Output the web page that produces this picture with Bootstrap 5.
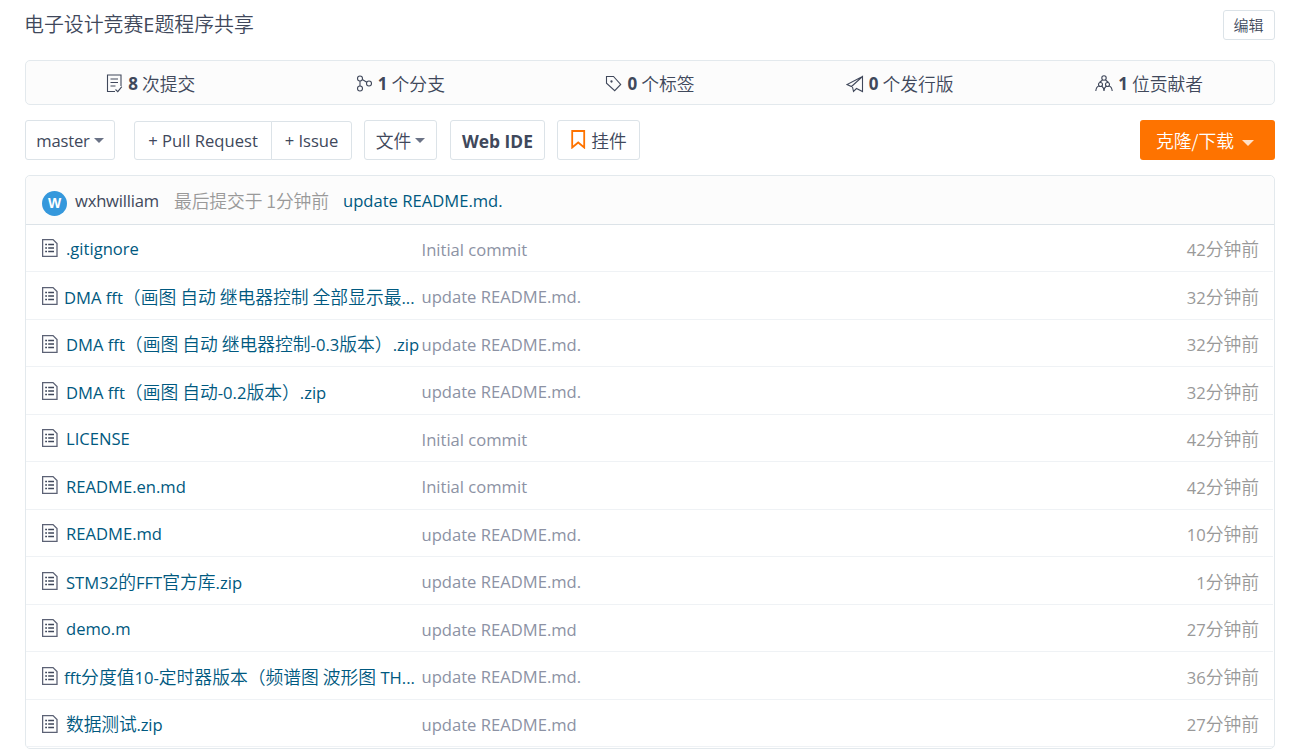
<!DOCTYPE html>
<html lang="zh-CN">
<head>
<meta charset="utf-8">
<title>电子设计竞赛E题程序共享</title>
<link href="https://cdn.jsdelivr.net/npm/bootstrap@5.3.0/dist/css/bootstrap.min.css" rel="stylesheet">
<style>
body{font-family:"Open Sans","Noto Sans CJK SC",sans-serif;font-size:16.6px;line-height:24px;color:#40485b;background:#fff;overflow:hidden}
.zh{font-family:"Noto Sans CJK SC",sans-serif;font-size:17.8px;font-weight:350}
.repo{width:1250px;margin-left:25px;padding-top:10px}
.title-row{height:30px;margin-bottom:20px}
.repo-title{font-size:19.9px;line-height:30px;margin:0 0 0 -1px;color:#40485b;font-weight:350}
.repo-title span{font-weight:400}
.btn-line{border:1px solid #dce3e8;border-radius:3px;background:#fff;color:#40485b;height:40px;padding:0;font-size:16.6px;line-height:24px;display:inline-flex;align-items:center;justify-content:center;white-space:nowrap}
.btn-edit{width:52px;height:30px;font-size:15px;padding-right:1px}
.stats{height:45px;border:1px solid #e3e9ed;border-radius:5px;background:#fcfcfc;margin-bottom:15px;padding-top:2px}
.stats b{margin:0 4px 0 5px;font-size:17px}
.stats .zh{margin-top:-1px}
.tools{height:40px;margin-bottom:15px}
.tools .btn-line{padding-top:1px}
.tools .btn-line .zh{margin-top:-2px}
.tools .pr-btn{height:39px;margin-top:1px;padding-top:0}
.caret{display:inline-block;border:5px solid transparent;border-top-color:#6b7386;border-bottom:0;margin-left:4px}
.btn-clone{width:135px;height:40px;border:0;border-radius:3px;background:#fe7300;color:#fff;padding:0 5px 1px 0}
.btn-clone .caret{border-width:6px 6px 0;border-top-color:#ffe0c6;margin-left:8px}
.panel{border:1px solid #e3e9ed;border-radius:5px;height:574px}
.panel-head{height:49px;background:#fcfcfc;border-bottom:1px solid #dce3e8;padding:1px 0 0 16px;border-radius:5px 5px 0 0}
.avatar{width:25px;height:25px;border-radius:50%;background:#3598dc;color:#fff;font:bold 14px/25px "Liberation Sans",sans-serif;text-align:center;margin:6px 8px 0 0}
.t-user{width:99px;letter-spacing:-.2px}
.t-last{width:169px;letter-spacing:-.1px;margin-top:-2px}
.file{height:47.5px;border-bottom:1px solid #eff2f5;padding:3px 14px 0 16px;margin-right:1px}
.panel-head + .file{margin-top:-.4px}
.fname{width:379.5px;color:#005980;white-space:nowrap}
.fname svg{margin-right:8px;margin-top:-6px}
.cut svg{margin-right:6px}
.msg{color:#8c92a4;padding-top:1px}
.when,.t-last{color:#999}
.lnk{color:#005980}
</style>
</head>
<body>
<svg width="0" height="0" class="position-absolute">
<symbol id="doc" viewBox="0 0 16 18"><path d="M.6 .6h10.400l4 4v12.800H.6z" fill="none" stroke="#5c6275" stroke-width="1.3"/><path d="M3.200 5.500h1.800M3.200 9h1.800M3.200 12.500h1.800M6.200 5.500h5.800M6.200 9h5.800M6.200 12.500h5.800" stroke="#40485b" stroke-width="1.400"/></symbol>
</svg>
<main class="repo">
<div class="title-row d-flex justify-content-between">
<h1 class="repo-title">电子设计竞赛<span>E</span>题程序共享</h1>
<button class="btn-line btn-edit zh">编辑</button>
</div>
<div class="stats row g-0 align-items-center">
<div class="col d-flex justify-content-center align-items-center"><svg width="17" height="19" viewBox="0 0 17 19" fill="none" stroke="#40485b" stroke-width="1.1"><path d="M15 12V1H1.500v16.500H9M4.500 5h7.500M4.500 8.500h7.500M4.500 12h5M9.500 15.500l2.300 2.200 4-5"/></svg><b>8</b><span class="zh">次提交</span></div>
<div class="col d-flex justify-content-center align-items-center"><svg width="17" height="17" viewBox="0 0 17 17" fill="none" stroke="#40485b" stroke-width="1.1"><circle cx="4" cy="3.500" r="2.500"/><circle cx="4" cy="13.500" r="2.500"/><circle cx="13" cy="8.500" r="2.500"/><path d="M4 6v5M6.300 4.600l4.500 2.600"/></svg><b>1</b><span class="zh">个分支</span></div>
<div class="col d-flex justify-content-center align-items-center"><svg width="17" height="17" viewBox="0 0 17 17" fill="none" stroke="#40485b" stroke-width="1.100"><path d="M1.500 1.500h7l7.200 8-6 6.200L1.500 8.200z"/><circle cx="6.500" cy="6.500" r=".6" fill="#40485b"/></svg><b>0</b><span class="zh">个标签</span></div>
<div class="col d-flex justify-content-center align-items-center"><svg width="18" height="18" viewBox="0 0 18 18" fill="none" stroke="#40485b" stroke-width="1.100"><path d="M16.500 1.500L1 9.500l4.500 2 11-10v15l-6-3-3 3-1-4.500"/></svg><b>0</b><span class="zh">个发行版</span></div>
<div class="col d-flex justify-content-center align-items-center"><svg width="18" height="17" viewBox="0 0 18 17" fill="none" stroke="#40485b" stroke-width="1.100"><circle cx="9" cy="3" r="2.200"/><circle cx="5.500" cy="9.500" r="2"/><circle cx="12.500" cy="9.500" r="2"/><path d="M7.500 5L4.500 7.500M10.500 5l3 2.500M.8 16c.3-3 1.500-4.500 3-5M9 16c0-2.500-1-4-2.300-5M9 16c0-2.500 1-4 2.300-5M17.200 16c-.3-3-1.500-4.500-3-5"/></svg><b>1</b><span class="zh">位贡献者</span></div>
</div>
<div class="tools d-flex align-items-center">
<button class="btn-line" style="width:90px"><span style="letter-spacing:-.2px">master</span><i class="caret"></i></button>
<div class="d-flex" style="margin:0 12px 0 19px"><button class="btn-line pr-btn rounded-end-0" style="width:138px">+ Pull Request</button><button class="btn-line pr-btn rounded-start-0" style="width:81px;margin-left:-1px">+ Issue</button></div>
<button class="btn-line" style="width:73px"><span class="zh">文件</span><i class="caret"></i></button>
<button class="btn-line" style="width:95px;margin:0 12px 0 13px"><b style="font-size:17.400px">Web IDE</b></button>
<button class="btn-line" style="width:83px"><svg width="15" height="19" viewBox="0 0 15 19" fill="none" stroke="#fe7300" stroke-width="1.800" style="margin:-3px 5px 0 1px"><path d="M1.200 1h12v16.500l-6-5-6 5z"/></svg><span class="zh">挂件</span></button>
<button class="btn-clone ms-auto zh">克隆/下载<i class="caret align-middle"></i></button>
</div>
<section class="panel">
<div class="panel-head d-flex align-items-center"><span class="avatar">W</span><span class="t-user">wxhwilliam</span><span class="zh t-last">最后提交于 1分钟前</span><span class="lnk">update README.md.</span></div>
<div class="file d-flex align-items-center"><div class="fname"><svg width="16" height="18"><use href="#doc"/></svg><span>.gitignore</span></div><span class="msg">Initial commit</span><span class="when ms-auto">42<span class="zh">分钟前</span></span></div>
<div class="file d-flex align-items-center"><div class="fname cut"><svg width="16" height="18"><use href="#doc"/></svg><span>DMA fft<span class="zh">（画图 自动 继电器控制 全部显示最</span>...</span></div><span class="msg">update README.md.</span><span class="when ms-auto">32<span class="zh">分钟前</span></span></div>
<div class="file d-flex align-items-center"><div class="fname"><svg width="16" height="18"><use href="#doc"/></svg><span>DMA fft<span class="zh">（画图 自动 继电器控制</span>-0.3<span class="zh">版本）</span>.zip</span></div><span class="msg">update README.md.</span><span class="when ms-auto">32<span class="zh">分钟前</span></span></div>
<div class="file d-flex align-items-center"><div class="fname"><svg width="16" height="18"><use href="#doc"/></svg><span>DMA fft<span class="zh">（画图 自动</span>-0.2<span class="zh">版本）</span>.zip</span></div><span class="msg">update README.md.</span><span class="when ms-auto">32<span class="zh">分钟前</span></span></div>
<div class="file d-flex align-items-center"><div class="fname"><svg width="16" height="18"><use href="#doc"/></svg><span>LICENSE</span></div><span class="msg">Initial commit</span><span class="when ms-auto">42<span class="zh">分钟前</span></span></div>
<div class="file d-flex align-items-center"><div class="fname"><svg width="16" height="18"><use href="#doc"/></svg><span>README.en.md</span></div><span class="msg">Initial commit</span><span class="when ms-auto">42<span class="zh">分钟前</span></span></div>
<div class="file d-flex align-items-center"><div class="fname"><svg width="16" height="18"><use href="#doc"/></svg><span>README.md</span></div><span class="msg">update README.md.</span><span class="when ms-auto">10<span class="zh">分钟前</span></span></div>
<div class="file d-flex align-items-center"><div class="fname"><svg width="16" height="18"><use href="#doc"/></svg><span>STM32<span class="zh">的</span>FFT<span class="zh">官方库</span>.zip</span></div><span class="msg">update README.md.</span><span class="when ms-auto">1<span class="zh">分钟前</span></span></div>
<div class="file d-flex align-items-center"><div class="fname"><svg width="16" height="18"><use href="#doc"/></svg><span>demo.m</span></div><span class="msg">update README.md</span><span class="when ms-auto">27<span class="zh">分钟前</span></span></div>
<div class="file d-flex align-items-center"><div class="fname cut"><svg width="16" height="18"><use href="#doc"/></svg><span>fft<span class="zh">分度值</span>10-<span class="zh">定时器版本（频谱图 波形图</span> TH...</span></div><span class="msg">update README.md.</span><span class="when ms-auto">36<span class="zh">分钟前</span></span></div>
<div class="file d-flex align-items-center"><div class="fname"><svg width="16" height="18"><use href="#doc"/></svg><span style="letter-spacing:-.15px"><span class="zh">数据测试</span>.zip</span></div><span class="msg">update README.md</span><span class="when ms-auto">27<span class="zh">分钟前</span></span></div>
</section>
</main>
<script src="https://cdn.jsdelivr.net/npm/bootstrap@5.3.0/dist/js/bootstrap.bundle.min.js"></script>
</body>
</html>
